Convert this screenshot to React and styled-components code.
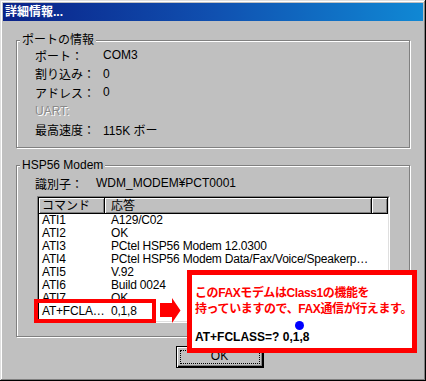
import styled, { createGlobalStyle } from "styled-components";

// Global
const GlobalStyle = createGlobalStyle`
  html, body { margin: 0; padding: 0; background: #c0c0c0; }
  body {
    font-family: "Liberation Sans", "Noto Sans CJK JP", sans-serif;
    font-size: 12px;
    color: #000;
  }
`;

// Window frame
const Window = styled.div`
  position: relative;
  box-sizing: border-box;
  width: 426px;
  height: 381px;
  padding: 3px;
  background: #c0c0c0;
  box-shadow: inset -1px -1px #000, inset 1px 1px #dfdfdf,
    inset -2px -2px #808080, inset 2px 2px #fff;
  display: flex;
  flex-direction: column;
  overflow: hidden;
`;
const TitleBar = styled.div`
  height: 18px;
  padding-left: 2px;
  line-height: 18px;
  color: #fff;
  font-weight: bold;
  background: linear-gradient(90deg, #0a2288 0%, #1050b0 50%, #1088d4 100%);
`;
const Body = styled.div`
  display: flex;
  flex-direction: column;
  padding: 0 0 0 13px;
`;

// Group box
const Group = styled.div`
  position: relative;
  box-sizing: border-box;
  width: 394px;
  height: ${(p) => p.$h}px;
  margin-top: ${(p) => p.$top}px;
  padding: ${(p) => p.$pt}px 0 0 18px;
  border: 1px solid #808080;
  box-shadow: inset 1px 1px #fff, 1px 1px #fff;
`;
const Legend = styled.span`
  position: absolute;
  top: -8px;
  left: 3px;
  padding: 0 2px;
  line-height: 14px;
  background: #c0c0c0;
`;
const Row = styled.div`
  display: flex;
  align-items: center;
  height: ${(p) => p.$h || 18}px;
  white-space: nowrap;
`;
const Label = styled.span`
  width: ${(p) => p.$w}px;
  color: ${(p) => (p.$disabled ? "#8a8a8a" : "#000")};
  text-shadow: ${(p) => (p.$disabled ? "1px 1px #fff" : "none")};
`;

// List view
const ListFrame = styled.div`
  box-sizing: border-box;
  width: 353px;
  height: 127px;
  margin: 4px 0 0 2px;
  border: 1px solid;
  border-color: #808080 #fff #fff #808080;
`;
const ListInner = styled.div`
  box-sizing: border-box;
  height: 100%;
  border: 1px solid;
  border-color: #000 #dfdfdf #dfdfdf #000;
  background: #fff;
  overflow: hidden;
`;
const Columns = styled.div`
  display: grid;
  grid-template-columns: 66px 267px 1fr;
  height: ${(p) => p.$h}px;
  line-height: ${(p) => p.$h}px;
`;
const HeadCell = styled.div`
  padding-left: ${(p) => p.$pl}px;
  background: #c0c0c0;
  box-shadow: inset -1px -1px #000, inset 1px 1px #fff, inset -2px -2px #808080;
  white-space: nowrap;
  overflow: hidden;
`;
const Cell = styled.div`
  padding-left: ${(p) => p.$pl}px;
  white-space: nowrap;
  overflow: hidden;
  text-overflow: ellipsis;
  letter-spacing: -0.2px;
`;

// Button
const Button = styled.button`
  align-self: center;
  display: flex;
  box-sizing: border-box;
  width: 88px;
  height: 22px;
  margin-top: 9px;
  padding: 3px;
  border: 1px solid #000;
  background: #c0c0c0;
  box-shadow: inset 1px 1px #fff, inset -1px -1px #000, inset -2px -2px #808080;
  font: inherit;
`;
const Focus = styled.span`
  flex: 1;
  display: flex;
  align-items: center;
  justify-content: center;
  padding-bottom: 3px;
  border: 1px dotted #000;
`;

// Annotation overlays
const Highlight = styled.div`
  position: absolute;
  left: 34px;
  top: 299px;
  box-sizing: border-box;
  width: 122px;
  height: 24px;
  border: 4px solid #f00;
`;
const Arrow = styled.svg`
  position: absolute;
  left: 160px;
  top: 298px;
`;
const Callout = styled.div`
  position: absolute;
  left: 187px;
  top: 270px;
  box-sizing: border-box;
  width: 230px;
  height: 83px;
  padding: 10px 0 0 3px;
  border: 5px solid #f00;
  background: #fff;
  font-weight: bold;
`;
const Note = styled.div`
  color: #f00;
  line-height: 16px;
  white-space: nowrap;
  letter-spacing: -0.4px;
`;
const Command = styled.div`
  margin-top: 12px;
  line-height: 16px;
  white-space: nowrap;
`;
const Dot = styled.span`
  position: absolute;
  left: 103px;
  top: 46px;
  width: 9px;
  height: 9px;
  border-radius: 50%;
  background: #00f;
`;

const port = [
  { k: "ポート：", v: "COM3" },
  { k: "割り込み：", v: "0" },
  { k: "アドレス：", v: "0" },
  { k: "UART:", v: "", disabled: true },
  { k: "最高速度：", v: "115K ボー" },
];

const responses = [
  ["ATI1", "A129/C02"],
  ["ATI2", "OK"],
  ["ATI3", "PCtel HSP56 Modem 12.0300"],
  ["ATI4", "PCtel HSP56 Modem Data/Fax/Voice/Speakerphone"],
  ["ATI5", "V.92"],
  ["ATI6", "Build 0024"],
  ["ATI7", "OK"],
  ["AT+FCLASS=?", "0,1,8"],
];

export default function App() {
  return (
    <>
      <GlobalStyle />
      <Window>
        <TitleBar>詳細情報...</TitleBar>
        <Body>
          <Group $top={19} $h={108} $pt={5}>
            <Legend>ポートの情報</Legend>
            {port.map((r) => (
              <Row key={r.k} $h={18.5}>
                <Label $w={68} $disabled={r.disabled}>{r.k}</Label>
                <span>{r.v}</span>
              </Row>
            ))}
          </Group>
          <Group $top={17} $h={172} $pt={8}>
            <Legend>HSP56 Modem</Legend>
            <Row>
              <Label $w={61}>識別子：</Label>
              <span>WDM_MODEM¥PCT0001</span>
            </Row>
            <ListFrame>
              <ListInner>
                <Columns $h={16}>
                  <HeadCell $pl={3}>コマンド</HeadCell>
                  <HeadCell $pl={6}>応答</HeadCell>
                  <HeadCell $pl={0} />
                </Columns>
                {responses.map(([cmd, res]) => (
                  <Columns key={cmd} $h={13}>
                    <Cell $pl={3}>{cmd}</Cell>
                    <Cell $pl={6}>{res}</Cell>
                    <Cell $pl={0} />
                  </Columns>
                ))}
              </ListInner>
            </ListFrame>
          </Group>
          <Button>
            <Focus>OK</Focus>
          </Button>
        </Body>

        <Highlight />
        <Arrow width="21" height="26" viewBox="0 0 21 26">
          <polygon points="0,5 12,5 12,0 20.5,12.5 12,25 12,19 0,19" fill="#f00" />
        </Arrow>
        <Callout>
          <Note>このFAXモデムはClass1の機能を</Note>
          <Note>持っていますので、FAX通信が行えます。</Note>
          <Command>AT+FCLASS=? 0,1,8</Command>
          <Dot />
        </Callout>
      </Window>
    </>
  );
}
